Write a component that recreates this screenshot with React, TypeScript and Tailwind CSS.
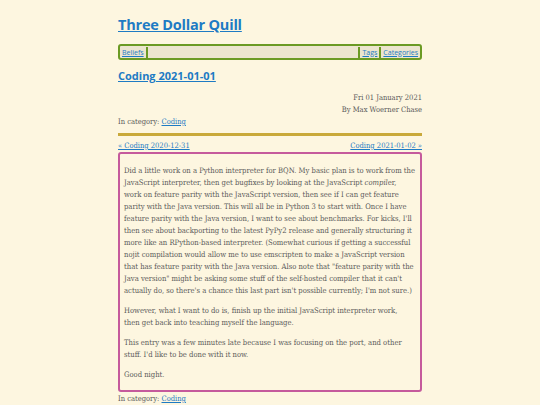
import React from "react";

const serif = { fontFamily: '"DejaVu Serif Condensed", "DejaVu Serif", serif' };

const p1 = [
  "Did a little work on a Python interpreter for BQN. My basic plan is to work from the",
  "JavaScript interpreter, then get bugfixes by looking at the JavaScript |compil|er,",
  "work on feature parity with the JavaScript version, then see if I can get feature",
  "parity with the Java version. This will all be in Python 3 to start with. Once I have",
  "feature parity with the Java version, I want to see about benchmarks. For kicks, I'll",
  "then see about backporting to the latest PyPy2 release and generally structuring it",
  "more like an RPython-based interpreter. (Somewhat curious if getting a successful",
  "nojit compilation would allow me to use emscripten to make a JavaScript version",
  "that has feature parity with the Java version. Also note that \"feature parity with the",
  "Java version\" might be asking some stuff of the self-hosted compiler that it can't",
  "actually do, so there's a chance this last part isn't possible currently; I'm not sure.)",
];

// lines are fixed so wrapping matches the original page
function Line({ text }: { text: string }) {
  if (text.includes("|")) {
    const [a, b, c] = text.split("|");
    return (
      <span className="block whitespace-nowrap">
        {a}
        <em>{b}</em>
        {c}
      </span>
    );
  }
  return <span className="block whitespace-nowrap">{text}</span>;
}

export default function App() {
  return (
    <div className="min-h-[405px] w-full bg-[#fdf6e0]">
      <div className="mx-auto w-[304px] pt-[14px] text-[#5a5a5a]" style={serif}>
        <h1 className="font-['Open_Sans',sans-serif] text-[14.5px] font-bold leading-[22px] tracking-[-0.2px]">
          <a href="#" className="text-[#1e7bc4] underline">Three Dollar Quill</a>
        </h1>

        <nav className="mt-[8px] flex h-[16px] items-center rounded-[3px] border-2 border-[#6b9a24] bg-[#ece5cf] px-[1px] font-['Open_Sans',sans-serif] text-[7px] leading-none">
          <a href="#" className="px-[1px] text-[#1e7bc4] underline">Beliefs</a>
          <span className="mx-[1px] h-[11px] w-[2px] bg-[#6b9a24]" />
          <span className="flex-1" />
          <span className="mx-[1px] h-[11px] w-[2px] bg-[#6b9a24]" />
          <a href="#" className="px-[1px] text-[#1e7bc4] underline">Tags</a>
          <span className="mx-[1px] h-[11px] w-[2px] bg-[#6b9a24]" />
          <a href="#" className="px-[1px] text-[#1e7bc4] underline">Categories</a>
        </nav>

        <h2 className="mt-[8px] font-['Open_Sans',sans-serif] text-[11px] font-bold leading-[16px]">
          <a href="#" className="text-[#1e7bc4] underline">Coding 2021-01-01</a>
        </h2>

        <div className="mt-[8px] text-right text-[7.5px] leading-[12px]">
          <div>Fri 01 January 2021</div>
          <div>By Max Woerner Chase</div>
        </div>
        <div className="text-[7.5px] leading-[12px]">
          In category: <a href="#" className="text-[#1e7bc4] underline">Coding</a>
        </div>

        <div className="mt-[5px] h-[3px] bg-[#c9a93a]" />

        <div className="mt-[4px] flex justify-between text-[7.5px] leading-[11px]">
          <a href="#" className="text-[#1e7bc4] underline">« Coding 2020-12-31</a>
          <a href="#" className="text-[#1e7bc4] underline">Coding 2021-01-02 »</a>
        </div>

        <article className="mt-[1px] rounded-[3px] border-2 border-[#c55a9c] px-[4px] pb-[9px] pt-[11px] text-[7.6px] leading-[12px]">
          <p>
            {p1.map((t, i) => (
              <Line key={i} text={t} />
            ))}
          </p>
          <p className="mt-[8px]">
            <Line text="However, what I want to do is, finish up the initial JavaScript interpreter work," />
            <Line text="then get back into teaching myself the language." />
          </p>
          <p className="mt-[8px]">
            <Line text="This entry was a few minutes late because I was focusing on the port, and other" />
            <Line text="stuff. I'd like to be done with it now." />
          </p>
          <p className="mt-[8px]">Good night.</p>
        </article>

        <div className="mt-[1px] text-[7.5px] leading-[12px]">
          In category: <a href="#" className="text-[#1e7bc4] underline">Coding</a>
        </div>
      </div>
    </div>
  );
}
